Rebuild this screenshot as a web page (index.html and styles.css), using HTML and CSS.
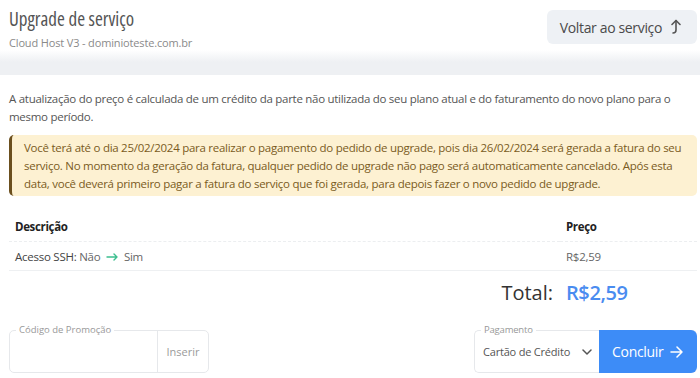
FILE: index.html
```html
<!DOCTYPE html>
<html lang="pt-BR">
<head>
    <meta charset="UTF-8">
    <title>Upgrade de serviço</title>
    <link rel="stylesheet" href="styles.css">
</head>
<body>
    <header class="page-head">
        <div>
            <h1>Upgrade de serviço</h1>
            <p class="subtitle">Cloud Host V3 - dominioteste.com.br</p>
        </div>
        <a class="back-btn" href="#">Voltar ao serviço
            <svg width="12" height="16" viewBox="0 0 12 16" fill="none" stroke="#555" stroke-width="1.6" stroke-linecap="round" stroke-linejoin="round">
                <path d="M2 5.5 L6 1.5 L10 5.5"/>
                <path d="M6 1.5 V11 Q6 14 3 14"/>
            </svg>
        </a>
    </header>

    <div class="band"></div>

    <main class="content">
        <p class="intro">A atualização do preço é calculada de um crédito da parte não utilizada do seu plano atual e do faturamento do novo plano para o mesmo período.</p>

        <div class="alert">
            Você terá até o dia 25/02/2024 para realizar o pagamento do pedido de upgrade, pois dia 26/02/2024 será gerada a fatura do seu serviço. No momento da geração da fatura, qualquer pedido de upgrade não pago será automaticamente cancelado. Após esta<br>
            data, você deverá primeiro pagar a fatura do serviço que foi gerada, para depois fazer o novo pedido de upgrade.
        </div>

        <table class="items">
            <thead>
                <tr>
                    <th>Descrição</th>
                    <th class="price-col">Preço</th>
                </tr>
            </thead>
            <tbody>
                <tr>
                    <td><span class="label">Acesso SSH:</span> Não
                        <svg class="arrow" width="12" height="8" viewBox="0 0 12 8" fill="none" stroke="#3dbf8f" stroke-width="1.4" stroke-linecap="round" stroke-linejoin="round">
                            <path d="M1 4 H11 M8 1 L11 4 L8 7"/>
                        </svg>
                        Sim</td>
                    <td class="price-col">R$2,59</td>
                </tr>
            </tbody>
        </table>

        <div class="total">
            <span class="total-label">Total:</span>
            <span class="total-value">R$2,59</span>
        </div>

        <div class="actions">
            <div class="group promo">
                <span class="float-label">Código de Promoção</span>
                <input class="promo-input" type="text">
                <button class="insert-btn">Inserir</button>
            </div>

            <div class="group checkout">
                <div class="select">
                    <span class="float-label">Pagamento</span>
                    <span>Cartão de Crédito</span>
                    <svg width="10" height="6" viewBox="0 0 10 6" fill="none" stroke="#555" stroke-width="1.5" stroke-linecap="round" stroke-linejoin="round">
                        <path d="M1 1 L5 5 L9 1"/>
                    </svg>
                </div>
                <button class="submit-btn">Concluir
                    <svg width="13" height="12" viewBox="0 0 13 12" fill="none" stroke="#fff" stroke-width="1.5" stroke-linecap="round" stroke-linejoin="round">
                        <path d="M1 6 H12 M7 1 L12 6 L7 11"/>
                    </svg>
                </button>
            </div>
        </div>
    </main>
</body>
</html>
```

FILE: styles.css
```css
body {
    margin: 0;
    font-family: "Open Sans", "Liberation Sans", sans-serif;
    color: #444;
    background: #fff;
}
button,
input {
    font-family: inherit;
}
.page-head {
    display: flex;
    justify-content: space-between;
    align-items: flex-start;
    padding: 6px 3px 0 9px;
    height: 44px;
}
.page-head h1 {
    margin: 0;
    font-size: 19px;
    font-weight: 400;
    font-stretch: 87.5%;
    color: #555;
    line-height: 26px;
}
.subtitle {
    margin: 3px 0 0;
    font-size: 11px;
    letter-spacing: -0.15px;
    color: #8a8a8a;
}
.back-btn {
    display: flex;
    align-items: center;
    gap: 8px;
    margin-top: 4px;
    height: 34px;
    padding: 0 15px 0 13px;
    background: #eef1f5;
    border-radius: 6px;
    color: #4a4a4a;
    font-size: 14px;
    letter-spacing: -0.35px;
    text-decoration: none;
}
.band {
    height: 25px;
    background: linear-gradient(#fff 0, #eef0f3 12px, #eef0f3 100%);
}
.content {
    padding: 0 3px 0 9px;
}
.intro {
    margin: 15px 0 0;
    font-size: 11.5px;
    letter-spacing: -0.28px;
    line-height: 18px;
    color: #555;
}
.alert {
    margin-top: 9px;
    padding: 4px 8px 3px 12px;
    background: #fdf1d2;
    border-left: 3px solid #6b4f1e;
    border-radius: 5px;
    color: #7a5b22;
    font-size: 11.5px;
    letter-spacing: -0.27px;
    line-height: 18px;
}
.items {
    width: 100%;
    margin-top: 16px;
    border-collapse: collapse;
    font-size: 11.5px;
    letter-spacing: -0.25px;
}
.items th,
.items td {
    padding: 0 6px;
    text-align: left;
    height: 28px;
}
.items th {
    color: #222;
    font-weight: 700;
    letter-spacing: -0.35px;
    border-bottom: 1px dashed #eceef0;
    height: 29px;
}
.items td {
    color: #666;
    border-bottom: 1px solid #eef0f2;
}
.items .label {
    color: #444;
}
.items .arrow {
    margin: 0 3px;
    vertical-align: middle;
}
.price-col {
    width: 125px;
}
.total {
    display: flex;
    justify-content: flex-end;
    align-items: baseline;
    gap: 13px;
    margin-top: 8px;
    font-size: 20px;
    line-height: 27px;
}
.total-label {
    color: #333;
}
.total-value {
    width: 131px;
    color: #4a8cf0;
    font-weight: 600;
    letter-spacing: -0.4px;
}
.actions {
    display: flex;
    justify-content: space-between;
    margin-top: 24px;
}
.group {
    position: relative;
    display: flex;
    height: 43px;
    box-sizing: border-box;
    border: 1px solid #e6e8eb;
    border-radius: 5px;
}
.float-label {
    position: absolute;
    top: -8px;
    left: 6px;
    padding: 0 3px;
    background: #fff;
    font-size: 9.5px;
    line-height: 14px;
    color: #999;
}
.promo {
    width: 200px;
}
.promo-input {
    width: 147px;
    padding: 0 8px;
    box-sizing: border-box;
    border: none;
    outline: none;
    background: none;
}
.insert-btn {
    flex: 1;
    padding: 0;
    border: none;
    border-left: 1px solid #e6e8eb;
    background: none;
    color: #9a9a9a;
    font-size: 11px;
}
.checkout {
    border-right: none;
}
.select {
    display: flex;
    align-items: center;
    justify-content: space-between;
    width: 124px;
    box-sizing: border-box;
    padding: 0 7px 0 8px;
    font-size: 11px;
    letter-spacing: -0.2px;
    color: #555;
}
.submit-btn {
    display: flex;
    align-items: center;
    gap: 6px;
    margin: -1px 0;
    padding: 0 13px;
    width: 98px;
    background: #3d8cf7;
    border: none;
    border-radius: 0 6px 6px 0;
    color: #fff;
    font-size: 14px;
    letter-spacing: -0.3px;
}
```
